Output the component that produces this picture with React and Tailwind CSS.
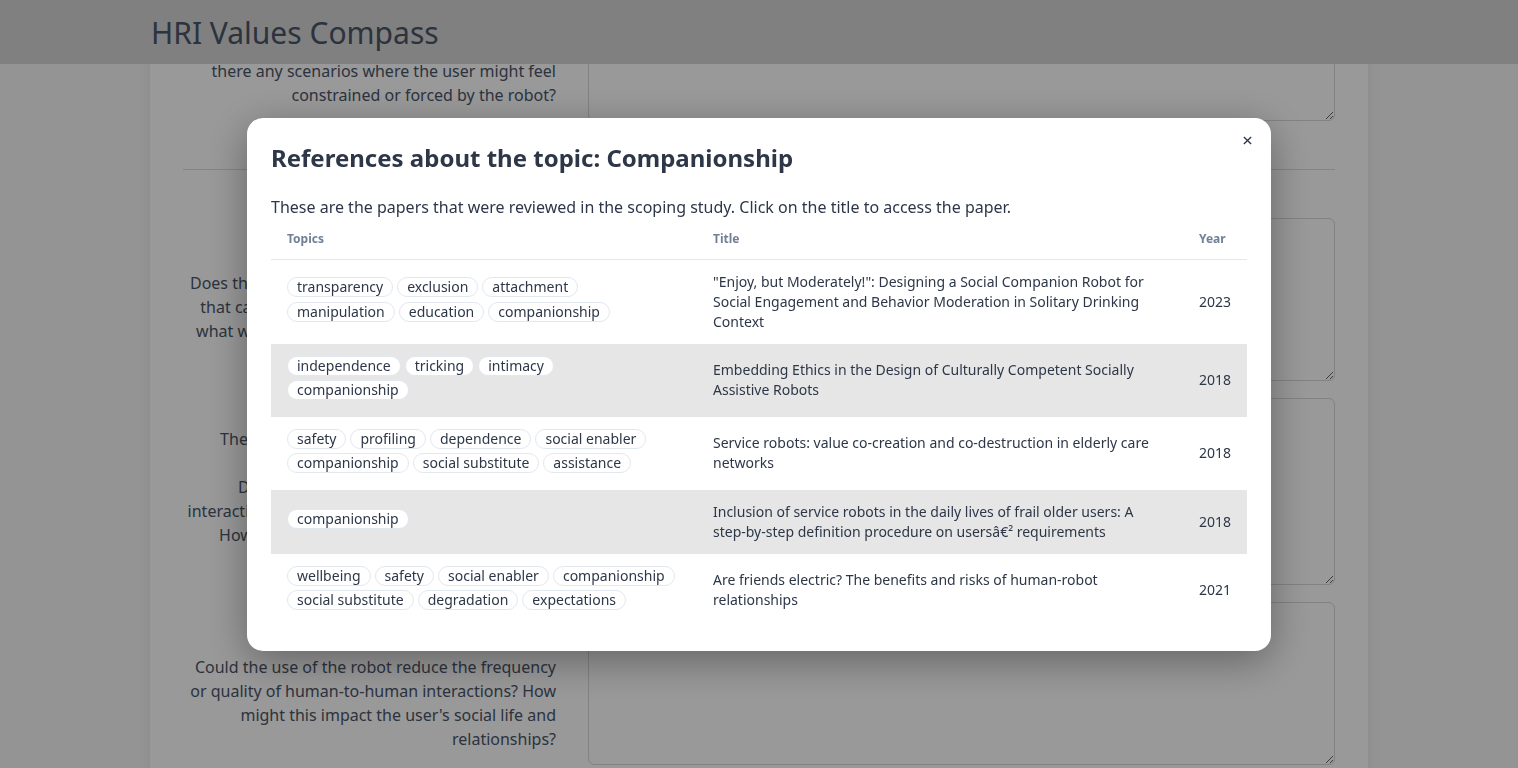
import { useLayoutEffect, useRef } from 'react';

const papers = [
  {
    topics: ['transparency', 'exclusion', 'attachment', 'manipulation', 'education', 'companionship'],
    title: '"Enjoy, but Moderately!": Designing a Social Companion Robot for Social Engagement and Behavior Moderation in Solitary Drinking Context',
    year: 2023,
  },
  {
    topics: ['independence', 'tricking', 'intimacy', 'companionship'],
    title: 'Embedding Ethics in the Design of Culturally Competent Socially Assistive Robots',
    year: 2018,
  },
  {
    topics: ['safety', 'profiling', 'dependence', 'social enabler', 'companionship', 'social substitute', 'assistance'],
    title: 'Service robots: value co-creation and co-destruction in elderly care networks',
    year: 2018,
  },
  {
    topics: ['companionship'],
    title: 'Inclusion of service robots in the daily lives of frail older users: A step-by-step definition procedure on usersâ€² requirements',
    year: 2018,
  },
  {
    topics: ['wellbeing', 'safety', 'social enabler', 'companionship', 'social substitute', 'degradation', 'expectations'],
    title: 'Are friends electric? The benefits and risks of human-robot relationships',
    year: 2021,
  },
];

function Question({ lines, pad, height, anchor }) {
  return (
    <div ref={anchor} className="grid grid-cols-[373px_1fr] gap-8">
      <p className={`text-right text-base leading-6 text-[#4a5568] ${pad}`}>
        {lines.map((l, i) => (
          <span key={i} className="block min-h-6 whitespace-nowrap">{l}</span>
        ))}
      </p>
      <textarea className={`w-full rounded-md border border-[#d9d9d9] bg-white ${height}`} />
    </div>
  );
}

function Tag({ label }) {
  return (
    <span className="mb-[4.5px] inline-flex h-5 items-center rounded-full border border-[#e2e8f0] bg-white px-[9px] text-sm leading-none text-[#2d3748]">
      {label}
    </span>
  );
}

export default function App() {
  const mainRef = useRef(null);
  const anchorRef = useRef(null);

  // page is scrolled so the autonomy question sits under the header
  useLayoutEffect(() => {
    const main = mainRef.current;
    main.scrollTop = 0;
    const top = anchorRef.current.getBoundingClientRect().top;
    main.scrollTop = top + 42;
  }, []);

  return (
    <div className="flex h-screen flex-col overflow-hidden bg-[#f7f7f7] font-['Noto_Sans',sans-serif]">

      {/* Header */}
      <header className="h-16 shrink-0 bg-[#d5d5d5]">
        <div className="mx-auto flex h-full w-[1218px] items-center pt-0.5 pl-px">
          <h1 className="text-3xl text-[#4a5568]">HRI Values Compass</h1>
        </div>
      </header>

      {/* Questionnaire (behind the modal) */}
      <main ref={mainRef} className="flex-1 overflow-hidden">
        <div className="mx-auto w-[1218px] bg-white px-[33px] pt-10 pb-40 shadow-lg">
          <h2 className="mb-10 text-center text-2xl font-bold text-[#4a5568]">Autonomy</h2>
          <div className="flex flex-col gap-[17px]">
            <Question
              pad="pt-[53px]"
              height="h-[163px]"
              lines={[
                'Could the robot make decisions on behalf of',
                'the user? In which situations would the user',
                'want to keep control over the interaction?',
              ]}
            />
            <Question
              anchor={anchorRef}
              pad="pt-[53px]"
              height="h-[163px]"
              lines={[
                "Does the robot respect the user's autonomy and",
                'right to make their own decisions? Are',
                'there any scenarios where the user might feel',
                'constrained or forced by the robot?',
              ]}
            />
          </div>

          <hr className="my-12 border-[#dcdcdc]" />

          <div className="flex flex-col gap-[17px]">
            <Question
              pad="pt-[53px]"
              height="h-[163px]"
              lines={[
                'Does the robot have any manipulative behaviour',
                "that can nudge the user towards a choice that's",
                'what would not be their own, independent one?',
              ]}
            />
            <Question
              pad="pt-[29px]"
              height="h-[187px]"
              lines={[
                'The robot is designed to act as a companion.',
                '',
                'Does the user form an emotional bond, by',
                'interacting with the robot for prolonged periods?',
                "How could this influence the user's wellness?",
              ]}
            />
            <Question
              pad="pt-[53px]"
              height="h-[163px]"
              lines={[
                'Could the use of the robot reduce the frequency',
                'or quality of human-to-human interactions? How',
                "might this impact the user's social life and",
                'relationships?',
              ]}
            />
            <Question
              pad="pt-[53px]"
              height="h-[163px]"
              lines={['Is the user aware that the robot is a machine', 'and not a real friend?']}
            />
          </div>
        </div>
      </main>

      {/* Modal */}
      <div className="fixed inset-0 flex items-center justify-center bg-black/40">
        <div className="relative w-[1024px] rounded-2xl bg-white p-6 shadow-[0_10px_40px_rgba(0,0,0,0.35)]">
          <button className="absolute top-[7px] right-2 flex h-8 w-8 items-center justify-center text-[#2d3748]">
            <svg viewBox="0 0 10 10" className="h-[9px] w-[9px]">
              <path d="M1 1l8 8M9 1l-8 8" stroke="currentColor" strokeWidth="1.5" />
            </svg>
          </button>

          <h3 className="text-2xl leading-8 font-bold text-[#2d3748]">
            References about the topic: Companionship
          </h3>
          <p className="mt-[21px] text-base leading-6 text-[#2d3748]">
            These are the papers that were reviewed in the scoping study. Click on the title to access the paper.
          </p>

          <table className="w-full table-fixed border-collapse text-left">
            <thead>
              <tr className="border-b border-[#e2e8f0]">
                <th className="w-[426px] px-4 py-3 text-xs leading-4 font-bold text-[#718096]">Topics</th>
                <th className="w-[486px] px-4 py-3 text-xs leading-4 font-bold text-[#718096]">Title</th>
                <th className="px-4 py-3 text-xs leading-4 font-bold text-[#718096]">Year</th>
              </tr>
            </thead>
            <tbody>
              {papers.map((paper, i) => (
                <tr key={paper.title} className={i % 2 === 1 ? 'bg-[#e6e6e6]' : 'bg-white'}>
                  <td className="px-4 py-3 align-middle">
                    <div className="flex max-w-[389px] flex-wrap gap-x-1">
                      {paper.topics.map((t) => (
                        <Tag key={t} label={t} />
                      ))}
                    </div>
                  </td>
                  <td className="px-4 py-3 align-middle text-sm leading-5 text-[#2d3748]">{paper.title}</td>
                  <td className="px-4 py-3 align-middle text-sm leading-5 text-[#2d3748]">{paper.year}</td>
                </tr>
              ))}
            </tbody>
          </table>
        </div>
      </div>

    </div>
  );
}
